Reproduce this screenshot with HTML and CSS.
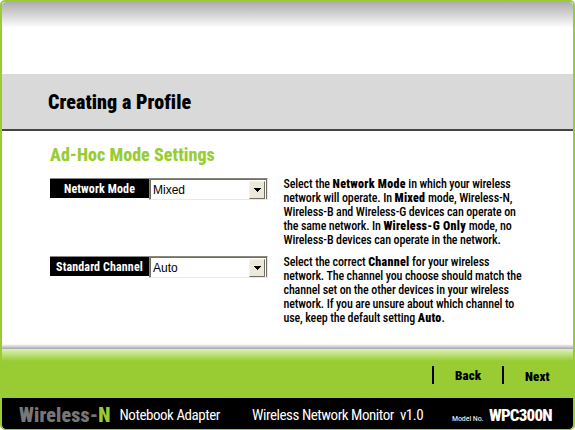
FILE: index.html
```html
<!DOCTYPE html>
<html lang="en">
<head>
<meta charset="utf-8">
<title>Wireless Network Monitor</title>
<link rel="stylesheet" href="styles.css">
</head>
<body>
<div class="window">
  <div class="top"></div>
  <header class="band"><h1 class="title">Creating a Profile</h1></header>
  <main class="content">
    <h2 class="subtitle">Ad-Hoc Mode Settings</h2>
    <section class="row">
      <div class="field">
        <label class="label">Network Mode</label>
        <div class="select"><span class="value">Mixed</span><span class="drop"><svg width="7" height="4" viewBox="0 0 7 4" shape-rendering="crispEdges"><path d="M0 0h7v1H6v1H5v1H4v1H3V3H2V2H1V1H0z"/></svg></span></div>
      </div>
      <p class="help">
        <span class="line">Select the <b>Network Mode</b> in which your wireless</span>
        <span class="line">network will operate. In <b>Mixed</b> mode, Wireless-N,</span>
        <span class="line">Wireless-B and Wireless-G devices can operate on</span>
        <span class="line">the same network. In <b>Wireless-G Only</b> mode, no</span>
        <span class="line">Wireless-B devices can operate in the network.</span>
      </p>
    </section>
    <section class="row">
      <div class="field">
        <label class="label">Standard Channel</label>
        <div class="select"><span class="value">Auto</span><span class="drop"><svg width="7" height="4" viewBox="0 0 7 4" shape-rendering="crispEdges"><path d="M0 0h7v1H6v1H5v1H4v1H3V3H2V2H1V1H0z"/></svg></span></div>
      </div>
      <p class="help">
        <span class="line">Select the correct <b>Channel</b> for your wireless</span>
        <span class="line">network. The channel you choose should match the</span>
        <span class="line">channel set on the other devices in your wireless</span>
        <span class="line">network. If you are unsure about which channel to</span>
        <span class="line">use, keep the default setting <b>Auto</b>.</span>
      </p>
    </section>
  </main>
  <div class="shade"></div>
  <nav class="nav">
    <a class="step">Back</a>
    <a class="step next">Next</a>
  </nav>
  <footer class="footer">
    <span class="brand">Wireless-<i>N</i></span>
    <span class="product">Notebook Adapter</span>
    <span class="monitor">Wireless Network Monitor&nbsp; v1.0</span>
    <span class="modelno">Model No.</span>
    <span class="model">WPC300N</span>
  </footer>
</div>
</body>
</html>
```
FILE: styles.css
```css
* { box-sizing: border-box; }
body { margin: 0; background: #fff; font-family: Roboto, "Liberation Sans", sans-serif; font-stretch: 75%; color: #000; }
.window { width: 575px; height: 430px; border: 2px solid #9c3; border-bottom-width: 1px; border-radius: 5px; background: #fff; overflow: hidden; display: flex; flex-direction: column; white-space: nowrap; }
.top { height: 72px; flex: none; background: linear-gradient(#adadad, #fff 26px); border-radius: 4px 4px 0 0; }
.band { height: 57px; flex: none; background: #d9d9d9; border-bottom: 2px solid #444; padding-left: 46px; display: flex; align-items: center; }
.title { margin: 0; font-size: 20px; line-height: 24px; font-weight: 900; letter-spacing: .07px; }
.content { flex: 1; padding: 13px 0 0 48px; }
.subtitle { margin: 0; font-size: 18px; line-height: 22px; color: #9c3; font-weight: 800; letter-spacing: .05px; }
.row { display: flex; height: 78px; }
.subtitle + .row { margin-top: 12px; }
.field { display: flex; width: 233.5px; }
.label { width: 99px; height: 20px; background: #000; border-top: 1px solid #888; color: #fff; text-align: center; font-size: 12px; font-weight: 700; line-height: 20px; letter-spacing: .12px; }
.select { width: 119px; height: 22px; display: flex; border: 1px solid; border-color: #8a8878 #ece9d8 #ece9d8 #8a8878; box-shadow: inset 1px 1px #716f64, inset -1px 0 #716f64; padding: 2px; }
.value { flex: 1; padding-left: 1px; font: 12px/19px "Liberation Sans", Arial, sans-serif; }
.drop { width: 16px; height: 18px; background: #ece9d8; border: 1px solid; border-color: #f5f3e8 #716f64 #716f64 #f5f3e8; display: flex; align-items: center; justify-content: center; }
.help { margin: -1px 0 0; font-size: 12px; line-height: 14px; font-weight: 500; letter-spacing: -.13px; }
.help b { font-weight: 900; letter-spacing: .28px; }
.line { display: block; }
.shade { height: 5px; flex: none; background: linear-gradient(#fff, #a5a5a5); }
.nav { height: 49px; flex: none; background: linear-gradient(#def0b8, #9c3 12px); display: flex; padding: 17px 0 0 430px; font-size: 13px; font-weight: 900; letter-spacing: .1px; }
.step { width: 70px; height: 18px; border-left: 2px solid #000; padding-left: 21px; line-height: 19px; }
.next { line-height: 21px; border-left-color: #000; }
.footer { height: 31px; flex: none; background: #000; border-radius: 0 0 4px 4px; color: #fff; display: grid; grid-template-columns: 100.5px 132.5px 200px 37px 80px; padding: 3px 0 0 17px; align-items: center; font-size: 15px; letter-spacing: -.45px; }
.brand { font-weight: 900; font-size: 20px; color: #777; letter-spacing: .15px; }
.brand i { color: #9c3; font-style: normal; }
.modelno { font-size: 8px; padding-top: 6px; letter-spacing: -.1px; }
.model { font-size: 17px; font-weight: 800; letter-spacing: -.8px; }
```
